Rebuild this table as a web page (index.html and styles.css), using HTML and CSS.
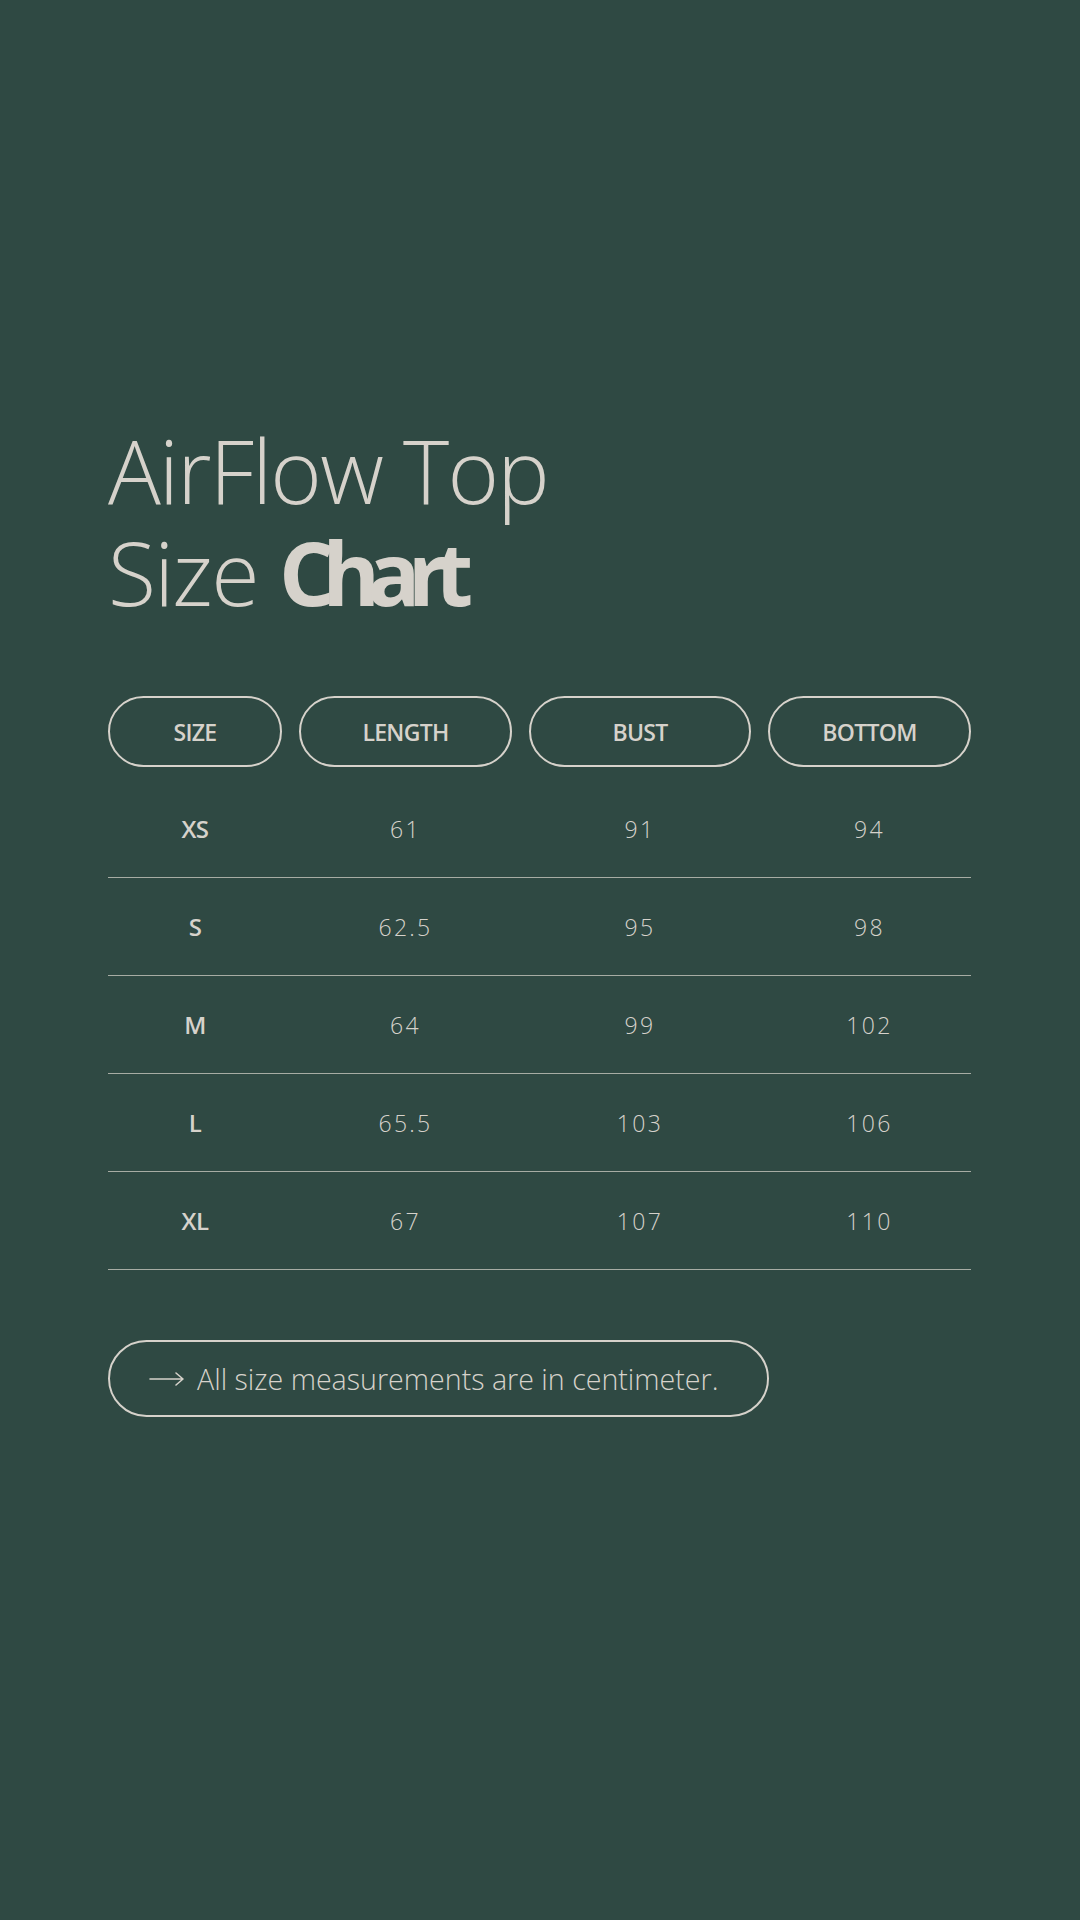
FILE: index.html
```html
<!DOCTYPE html>
<html lang="en">
<head>
<meta charset="utf-8">
<title>AirFlow Top Size Chart</title>
<link rel="stylesheet" href="styles.css">
</head>
<body>
<main class="page">
  <h1 class="title">
    <span class="line">AirFlow Top</span>
    <span class="line">Size <strong class="bold">Chart</strong></span>
  </h1>

  <section class="chart">
    <div class="head">
      <div class="pill">SIZE</div>
      <div class="pill">LENGTH</div>
      <div class="pill">BUST</div>
      <div class="pill">BOTTOM</div>
    </div>
    <div class="rows">
      <div class="row"><span class="size">XS</span><span class="num">61</span><span class="num">91</span><span class="num">94</span></div>
      <div class="row"><span class="size">S</span><span class="num">62.5</span><span class="num">95</span><span class="num">98</span></div>
      <div class="row"><span class="size">M</span><span class="num">64</span><span class="num">99</span><span class="num">102</span></div>
      <div class="row"><span class="size">L</span><span class="num">65.5</span><span class="num">103</span><span class="num">106</span></div>
      <div class="row"><span class="size">XL</span><span class="num">67</span><span class="num">107</span><span class="num">110</span></div>
    </div>
  </section>

  <div class="note">
    <svg class="arrow" width="36" height="16" viewBox="0 0 36 16" aria-hidden="true">
      <path d="M1 8 H34 M27 2 L34 8 L27 14" fill="none" stroke="#d6d2cb" stroke-width="1.6" stroke-linecap="round" stroke-linejoin="round"/>
    </svg>
    <span class="note-text">All size measurements are in centimeter.</span>
  </div>
</main>
</body>
</html>
```

FILE: styles.css
```css
html, body {
  margin: 0;
  padding: 0;
}
body {
  background: #2f4943;
  color: #d6d2cb;
  font-family: "Open Sans", "Noto Sans", sans-serif;
  width: 1080px;
  height: 1920px;
  overflow: hidden;
}
.page {
  padding: 419px 0 0 108px;
  width: 863px;
}
.title {
  margin: 0;
  font-weight: 300;
  font-size: 88px;
  line-height: 102px;
  letter-spacing: -0.02em;
  word-spacing: 0;
}
.line {
  display: block;
}
.bold {
  font-weight: 700;
  letter-spacing: -0.145em;
}
.chart {
  margin-top: 73px;
}
.head {
  display: grid;
  grid-template-columns: 174px 213px 222px 203px;
  column-gap: 17px;
}
.pill {
  height: 71px;
  box-sizing: border-box;
  border: 2px solid #d6d2cb;
  border-radius: 36px;
  display: flex;
  align-items: center;
  justify-content: center;
  font-size: 23px;
  font-weight: 600;
  letter-spacing: -0.03em;
}
.rows {
  margin-top: 13px;
}
.row {
  display: grid;
  grid-template-columns: 174px 213px 222px 203px;
  column-gap: 17px;
  height: 97px;
  align-items: center;
  justify-items: center;
  border-bottom: 1px solid rgba(214, 210, 203, 0.72);
}
.size {
  font-size: 24px;
  font-weight: 600;
  letter-spacing: -0.02em;
}
.num {
  font-size: 23px;
  font-weight: 300;
  letter-spacing: 0.1em;
}
.note {
  margin-top: 70px;
  display: inline-flex;
  align-items: center;
  gap: 12px;
  height: 77px;
  box-sizing: border-box;
  padding: 0 48px 0 39px;
  border: 2px solid #d6d2cb;
  border-radius: 39px;
}
.arrow {
  display: block;
}
.note-text {
  font-size: 28.6px;
  font-weight: 300;
  letter-spacing: 0;
}
```
